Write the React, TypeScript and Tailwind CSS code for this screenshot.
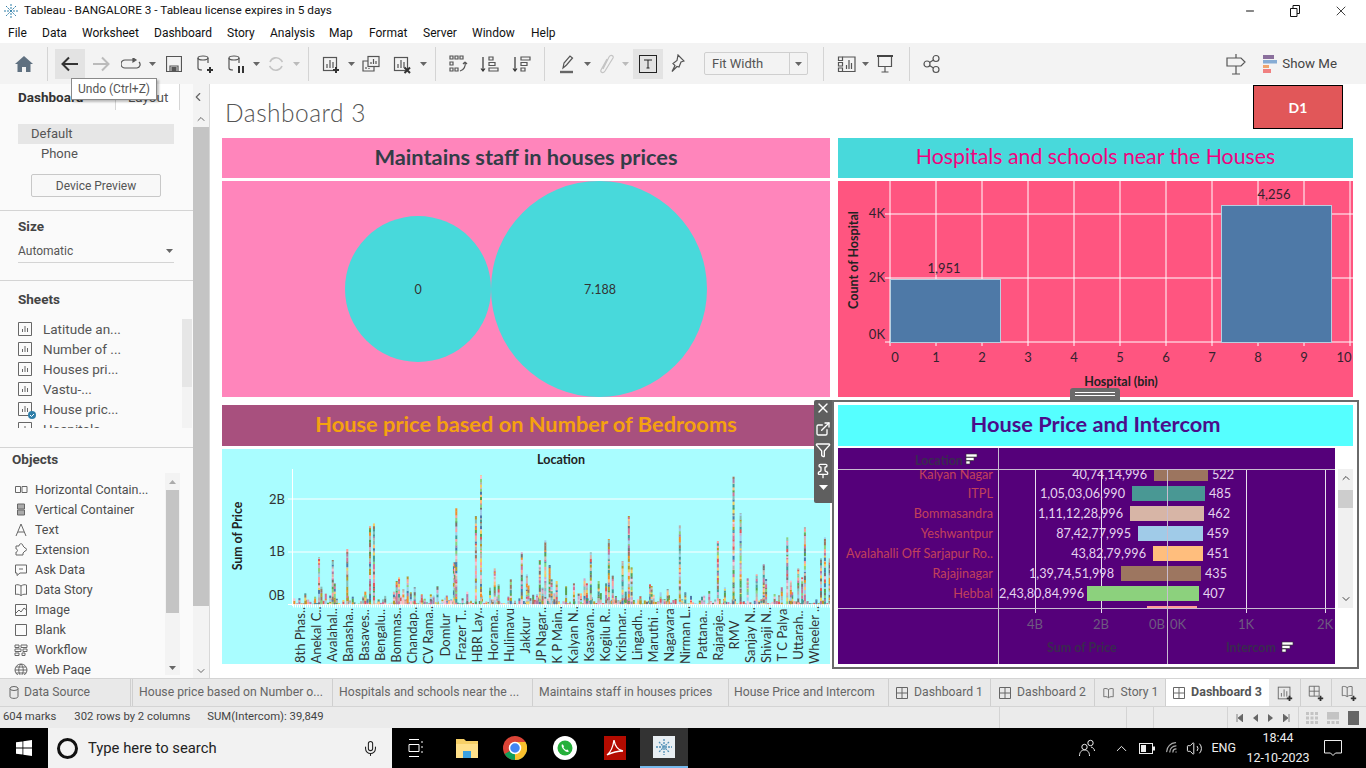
// App.tsx
import React from 'react';
import { ChevronLeft, ChevronUp, ChevronDown, X, Minus, ExternalLink, Filter, Pin, Mic, Wifi, Volume2 } from 'lucide-react';

const ui = 'font-["Roboto","Liberation_Sans",sans-serif]';
const book = 'font-["Lato","Open_Sans",sans-serif]';

const palette = ['#4e79a7', '#a0cbe8', '#f28e2b', '#ffbe7d', '#59a14f', '#8cd17d', '#b6992d', '#f1ce63', '#499894', '#86bcb6', '#e15759', '#ff9d9a', '#79706e', '#bab0ac', '#d37295', '#fabfd2', '#b07aa1', '#d4a6c8', '#9d7660', '#d7b5a6'];

// x, top of the tall bars as read off the reference
const tallBars: [number, number][] = [[187, 460], [215, 445], [250, 337], [256, 425], [240, 455], [285, 345], [290, 415], [322, 312], [336, 455], [368, 440], [380, 243], [390, 235], [402, 462], [441, 440], [448, 408], [454, 397], [465, 432], [476, 394], [484, 442], [494, 427], [512, 448], [535, 448], [552, 424], [572, 458], [594, 352], [597, 352], [600, 190], [616, 460], [628, 440], [650, 213], [663, 90], [686, 428], [698, 370], [708, 418], [739, 403], [767, 322], [780, 388], [784, 420], [796, 448], [813, 345], [820, 428], [827, 286], [838, 360], [843, 403], [850, 445], [856, 408], [880, 424], [900, 415], [912, 445], [927, 400], [933, 415], [943, 322], [963, 408], [982, 415], [989, 282], [999, 392], [1007, 453], [1024, 348], [1032, 440], [1040, 213], [1047, 366], [1070, 463], [1094, 418], [1098, 423], [1121, 442], [1139, 433], [1170, 241], [1184, 442], [1245, 438], [1267, 288], [1285, 427], [1307, 95], [1325, 205], [1343, 400], [1366, 388], [1384, 358], [1390, 402], [1430, 427], [1444, 277], [1453, 407], [1472, 370], [1482, 397], [1489, 246], [1530, 340], [1540, 277], [1552, 340]];

let seed = 17;
const rnd = () => {
  seed = (seed * 16807) % 2147483647;
  return seed / 2147483647;
};

const stackedBars = (() => {
  const out: { x: number; y: number; h: number; c: string }[] = [];
  const push = (x: number, top: number) => {
    let y = 604;
    while (y > top) {
      const h = Math.min(1 + rnd() * 3, y - top);
      y -= h;
      out.push({ x, y, h: h + 0.2, c: palette[Math.floor(rnd() * palette.length)] });
    }
  };
  for (let x = 294; x < 830; x += 2.2) push(x, 604 - rnd() * rnd() * 12);
  tallBars.forEach(([zx, zy]) => push(220 + zx / 2.55, 445 + zy / 3));
  return out;
})();

const locations = ['8th Phas..', 'Anekal C..', 'Avalahal..', 'Banasha..', 'Basaves..', 'Bengalu..', 'Bommas..', 'Chandap..', 'CV Rama..', 'Domlur', 'Frazer T..', 'HBR Lay..', 'Horama..', 'Hulimavu', 'Jakkur', 'JP Nagar..', 'K P Main..', 'Kalyan N..', 'Kasavan..', 'Kogilu R..', 'Krishnar..', 'Lingadh..', 'Maruthi ..', 'Nagavara', 'Nirman L..', 'Pattana..', 'Rajaraje..', 'RMV', 'Sanjay N..', 'Shivaji N..', 'T C Palya', 'Uttarah..', 'Wheeler ..'];

const intercomRows = [
  { name: 'Kalyan Nagar', price: '40,74,14,996', n: '522', x: 1154, w: 54, y: 469, h: 12, c: '#9c755f', ty: 475, px: 1147 },
  { name: 'ITPL', price: '1,05,03,06,990', n: '485', x: 1132, w: 73, y: 486, h: 15, c: '#499894', ty: 494, px: 1125 },
  { name: 'Bommasandra', price: '1,11,12,28,996', n: '462', x: 1130, w: 74, y: 506, h: 15, c: '#d7b5a6', ty: 514, px: 1123 },
  { name: 'Yeshwantpur', price: '87,42,77,995', n: '459', x: 1138, w: 65, y: 526, h: 15, c: '#a0cbe8', ty: 534, px: 1131 },
  { name: 'Avalahalli Off Sarjapur Ro..', price: '43,82,79,996', n: '451', x: 1153, w: 50, y: 546, h: 15, c: '#ffbe7d', ty: 554, px: 1146 },
  { name: 'Rajajinagar', price: '1,39,74,51,998', n: '435', x: 1121, w: 80, y: 566, h: 15, c: '#9d7660', ty: 574, px: 1114 },
  { name: 'Hebbal', price: '2,43,80,84,996', n: '407', x: 1087, w: 112, y: 586, h: 15, c: '#8cd17d', ty: 594, px: 1084 },
];

function SortMark({ x, y }: { x: number; y: number }) {
  return (
    <g transform={`translate(${x} ${y})`} fill="#fff" stroke="#333" strokeWidth="0.6">
      <rect x="0" y="0" width="11" height="3" />
      <rect x="0" y="3.5" width="8" height="3" />
      <rect x="0" y="7" width="4" height="3" />
    </g>
  );
}

function Icon({ children, w = 20, h = 20, vb = '0 0 20 20', className = '' }: { children: React.ReactNode; w?: number; h?: number; vb?: string; className?: string }) {
  return (
    <svg width={w} height={h} viewBox={vb} fill="none" stroke="#555" strokeWidth="1.2" className={className}>
      {children}
    </svg>
  );
}

const Caret = ({ light }: { light?: boolean }) => (
  <svg width="7" height="4" viewBox="0 0 7 4"><path d="M0 0h7L3.5 4z" fill={light ? '#bbb' : '#666'} /></svg>
);

const Slot = ({ w, active, children }: { w: string; active?: boolean; children?: React.ReactNode }) => (
  <div className={`flex h-[30px] items-center justify-center ${w} ${active ? 'bg-[#e3e3e3]' : ''}`}>{children}</div>
);

const BarGlyph = () => (
  <>
    <rect x="2.5" y="3.5" width="13" height="13" />
    <path d="M6 14V10M9 14V6M12 14V8" />
  </>
);

const Plus = () => <path d="M15 13v6M12 16h6" stroke="#333" strokeWidth="2" />;
const Cyl = () => (
  <>
    <ellipse cx="8" cy="4" rx="5" ry="2" />
    <path d="M3 4v10c0 1.2 2 2 4 2M13 4v5" />
  </>
);

function Toolbar() {
  return (
    <div className="relative flex h-[41px] items-center bg-[#f3f3f3] pl-[8px]">
      <Slot w="w-[32px]">
        <svg width="18" height="16" viewBox="0 0 18 16"><path d="M9 0L0 8h2.5v8h4.5v-5h4v5h4.5V8H18z" fill="#5f7080" /></svg>
      </Slot>
      <div className="mx-[7px] h-[34px] w-px bg-[#d4d4d4]" />
      <Slot w="w-[30px]" active>
        <Icon w={20} h={18} vb="0 0 20 18"><path d="M18 9H3M9 2.5L2.5 9 9 15.5" stroke="#333" strokeWidth="2" /></Icon>
      </Slot>
      <Slot w="w-[32px]">
        <Icon w={20} h={18} vb="0 0 20 18"><path d="M2 9h15M11 2.5L17.5 9 11 15.5" stroke="#bbb" strokeWidth="2" /></Icon>
      </Slot>
      <Slot w="w-[28px]">
        <Icon w={20} h={12} vb="0 0 20 12"><path d="M13 2H4a3.5 3.5 0 0 0 0 8h12a3.5 3.5 0 0 0 2-6" /><path d="M12 0l3 2-3 2z" fill="#555" /></Icon>
      </Slot>
      <Slot w="w-[14px]"><Caret /></Slot>
      <Slot w="w-[30px]">
        <Icon w={16} h={16} vb="0 0 16 16"><path d="M.5.5h15v15H.5z" /><path d="M4 15v-5h8v5" /><rect x="6" y="11.5" width="4" height="4" fill="#555" /></Icon>
      </Slot>
      <Slot w="w-[32px]"><Icon><Cyl /><Plus /></Icon></Slot>
      <Slot w="w-[30px]"><Icon><Cyl /><path d="M13 12v7M17 12v7" stroke="#333" strokeWidth="2" /></Icon></Slot>
      <Slot w="w-[10px]"><Caret /></Slot>
      <Slot w="w-[30px]">
        <Icon w={18} h={18} vb="0 0 18 18"><path d="M3 7a6.5 6.5 0 0 1 11-2l1.5 2M15 11a6.5 6.5 0 0 1-11 2L2.5 11" stroke="#c4c4c4" strokeWidth="1.6" /></Icon>
      </Slot>
      <Slot w="w-[10px]"><Caret light /></Slot>
      <div className="mx-[7px] h-[34px] w-px bg-[#d4d4d4]" />
      <Slot w="w-[30px]"><Icon><BarGlyph /><Plus /></Icon></Slot>
      <Slot w="w-[10px]"><Caret /></Slot>
      <Slot w="w-[30px]">
        <Icon>
          <rect x="7" y="2.5" width="11" height="10" fill="#f3f3f3" />
          <path d="M10 10V8M12.5 10V5M15 10V7" />
          <path d="M7 7H2v10h11v-4" />
          <path d="M5 15v-2M8 15v-1" />
        </Icon>
      </Slot>
      <Slot w="w-[32px]"><Icon><BarGlyph /><path d="M12.5 13.5l5.5 5.5M18 13.5L12.5 19" stroke="#333" strokeWidth="2" /></Icon></Slot>
      <Slot w="w-[10px]"><Caret /></Slot>
      <div className="mx-[7px] h-[34px] w-px bg-[#d4d4d4]" />
      <Slot w="w-[30px]">
        <Icon>
          <path d="M2 2h3v3H2zM7 2h3v3H7zM12 2h3v3h-3zM2 8h3v3H2zM2 14h3v3H2zM7 14h3v3H7z" />
          <path d="M17 8c1 4-1 8-5 9M17 8l-2 2M17 8l2 2" />
        </Icon>
      </Slot>
      <Slot w="w-[34px]">
        <Icon><path d="M3 3v14M1 14.5L3 17l2-2.5" stroke="#333" /><path d="M9 3h4v3H9zM9 8.5h6v3H9zM9 14h9v3H9z" /></Icon>
      </Slot>
      <Slot w="w-[30px]">
        <Icon><path d="M3 3v14M1 14.5L3 17l2-2.5" stroke="#333" /><path d="M9 3h9v3H9zM9 8.5h6v3H9zM9 14h4v3H9z" /></Icon>
      </Slot>
      <div className="mx-[7px] h-[34px] w-px bg-[#d4d4d4]" />
      <Slot w="w-[32px]">
        <Icon><path d="M5 14L6 9l6-7 2.5 2-6 7zM5 14l3-2.500" /><path d="M2 18h13" stroke="#666" strokeWidth="2.4" /></Icon>
      </Slot>
      <Slot w="w-[7px]"><Caret /></Slot>
      <Slot w="w-[30px]">
        <Icon w={16} h={20} vb="0 0 16 20"><path d="M5 15l6-12c2-3 5-1 4 1L7 17c-2 3-5 1-4-1l6-11" stroke="#c4c4c4" /></Icon>
      </Slot>
      <Slot w="w-[9px]"><Caret light /></Slot>
      <div className="w-[3px]" />
      <Slot w="w-[30px]" active>
        <svg width="18" height="18" viewBox="0 0 18 18" fill="none" stroke="#222"><rect x=".5" y=".5" width="17" height="17" /><path d="M5 5h8M9 5v8M7.500 13h3" /></svg>
      </Slot>
      <Slot w="w-[28px]">
        <Icon w={16} h={20} vb="0 0 16 20"><path d="M9 1l6 6-3 1-2 5-2-.500-5 5 3-6-2-2 4-3z" /></Icon>
      </Slot>
      <div className="w-[13px]" />
      <div className={`flex h-[23px] w-[104px] items-center rounded-[2px] border border-[#cfcfcf] bg-[#f3f3f3] pl-[7px] text-[13px] text-[#555] ${ui}`}>
        <span className="flex-1">Fit Width</span>
        <span className="flex h-full w-[18px] items-center justify-center border-l border-[#cfcfcf]"><Caret /></span>
      </div>
      <div className="w-[15px]" />
      <div className="h-[34px] w-px bg-[#d4d4d4]" />
      <div className="w-[8px]" />
      <Slot w="w-[30px]">
        <Icon>
          <path d="M1.500 3h4v3.500h-4zM1.500 8.500h4V12h-4zM1.500 14h4v3.500h-4z" />
          <path d="M5.500 3H18v14.500H5.500" />
          <path d="M9.500 15v-4M12 15V6M14.500 15V9" />
        </Icon>
      </Slot>
      <Slot w="w-[7px]"><Caret /></Slot>
      <Slot w="w-[32px]">
        <Icon>
          <path d="M2 2h16" stroke="#444" strokeWidth="2" />
          <path d="M3.500 3v9.500h13V3M10 12.500V18M6.500 18h7" />
        </Icon>
      </Slot>
      <div className="mx-[8px] h-[34px] w-px bg-[#d4d4d4]" />
      <Slot w="w-[28px]">
        <Icon>
          <circle cx="5" cy="10" r="3" />
          <circle cx="14" cy="4.500" r="3" />
          <circle cx="14" cy="15.500" r="3" />
          <path d="M7.500 8.500l4-2.500M7.500 11.500l4 2.500" />
        </Icon>
      </Slot>
      <div className="flex-1" />
      <Slot w="w-[22px]">
        <Icon w={20} h={22} vb="0 0 20 22">
          <path d="M1 5h14l4 4-4 4H1z" />
          <path d="M10 1v4M10 13v8M6 21h8" />
        </Icon>
      </Slot>
      <div className="w-[16px]" />
      <svg width="14" height="18" viewBox="0 0 14 18">
        <rect width="11" height="4" fill="#8a6f9c" />
        <rect y="5" width="14" height="3.500" fill="#86acd4" />
        <rect y="10" width="6" height="3" fill="#f0a56d" />
        <rect y="14" width="8" height="4" fill="#f08080" />
      </svg>
      <span className={`ml-[5px] mr-[29px] text-[13.300px] text-[#444] ${ui}`}>Show Me</span>
      <div className={`absolute left-[71px] top-[35px] z-20 border border-[#8a8a8a] bg-[#fff] px-[6px] py-[1px] text-[12px] text-[#555] shadow-[2px_2px_2px_rgba(0,0,0,0.25)] ${ui}`}>Undo (Ctrl+Z)</div>
    </div>
  );
}

const menus = [
  ['File', 'w-[34px]'], ['Data', 'w-[40px]'], ['Worksheet', 'w-[72px]'], ['Dashboard', 'w-[73px]'], ['Story', 'w-[43px]'], ['Analysis', 'w-[59px]'], ['Map', 'w-[40px]'], ['Format', 'w-[54px]'], ['Server', 'w-[49px]'], ['Window', 'w-[59px]'], ['Help', 'w-[40px]'],
];

const sheets = ['Latitude an...', 'Number of ...', 'Houses pri...', 'Vastu-...', 'House pric...', 'Hospitals'];

const objectIcons: Record<string, React.ReactNode> = {
  'Horizontal Contain...': <path d="M1.500 3.500h5v6h-5zM8 3.500h5v6H8z" />,
  'Vertical Container': <path d="M3.500 1h7v5h-7zM3.500 7h7v5h-7z" fill="#aaa" />,
  Text: <path d="M2 13L7 1l5 12M4 9h6" />,
  Extension: <path d="M2 6V3h3c0-3 4-3 4 0l2 2c2 0 2 3 0 3l-2 2v2H2V9c2 0 2-3 0-3z" />,
  'Ask Data': <path d="M1.500 2h11v8H6l-3 2.500V10H1.500zM5 6h4" />,
  'Data Story': <path d="M7 3C5 1.500 3 1.500 1.500 2v9.500c1.500-.5 3.500-.5 5.500 1 2-1.500 4-1.500 5.500-1V2C11 1.500 9 1.500 7 3zM7 3v9.500" />,
  Image: <path d="M1.500 1.500h11v11h-11zM2 10l3-3 2 2 3-4 2.500 2" />,
  Blank: <path d="M1.500 1.500h11v11h-11z" />,
  Workflow: <path d="M1 2h4v2.500H1zM7 2h6v2.500H7zM1 6h6v2.500H1zM9 6h4v2.500H9zM1 10h4v2.500H1zM8 10h3v2.500H8z" />,
  'Web Page': <path d="M7 1a6 6 0 1 0 0 12A6 6 0 0 0 7 1zM1 7h12M7 1c-3 3-3 9 0 12M7 1c3 3 3 9 0 12M2 4h10M2 10h10" />,
};

function Sidebar() {
  return (
    <aside className={`flex h-full w-[210px] shrink-0 bg-[#fafafa] text-[13px] text-[#555] ${ui}`}>
      <div className="relative w-[193px]">
        <div className="flex h-[26px]">
          <div className="w-[115px] pl-[18px] pt-[3px] text-[13.500px] font-bold text-[#333]">Dashboard</div>
          <div className="h-[26px] w-[65px] border-x border-[#d6d6d6] bg-[#fff] pl-[12px] pt-[3px] text-[13.500px] text-[#555]">Layout</div>
        </div>
        <div className="h-[1px]" />
        <div className="ml-[18px] mt-[13px] h-[20px] w-[156px] bg-[#e6e6e6] pl-[13px] leading-[20px]">Default</div>
        <div className="ml-[41px] h-[20px] leading-[20px]">Phone</div>
        <div className="ml-[31px] mt-[10px] flex h-[23px] w-[130px] items-center justify-center rounded-[2px] border border-[#c8c8c8] bg-[#f8f8f8] text-[12px]">Device Preview</div>
        <div className="mt-[13px] h-px bg-[#d4d4d4]" />
        <div className="ml-[18px] mt-[6px] h-[20px] text-[13.500px] font-bold leading-[18px] text-[#444]">Size</div>
        <div className="ml-[18px] mt-[6px] flex h-[20px] w-[156px] items-center justify-between border-b border-[#d4d4d4] pb-[4px] pr-[1px] text-[12px]">
          Automatic <Caret />
        </div>
        <div className="mt-[17px] h-px bg-[#d4d4d4]" />
        <div className="ml-[18px] mt-[9px] h-[20px] text-[13.500px] font-bold leading-[18px] text-[#444]">Sheets</div>
        <div className="relative ml-[18px] mt-[9px] h-[109px] w-[174px] overflow-hidden">
          <div className="absolute right-0 top-0 h-full w-[10px] bg-[#f3f3f3]"><div className="h-[68px] bg-[#e6e6e6]" /></div>
          {sheets.map((s, i) => (
            <div key={s} className="flex h-[20px] items-center gap-[11px]">
              <span className="relative">
                <svg width="14" height="14" viewBox="0 0 14 14" fill="none" stroke="#666" className="block">
                  <path d="M.5.5h13v13H.5zM4.500 10V7M7 10V4M9.500 10V6" />
                </svg>
                {i === 4 && (
                  <svg width="8" height="8" viewBox="0 0 8 8" className="absolute -bottom-[3px] -right-[4px]">
                    <circle cx="4" cy="4" r="4" fill="#2f7ea8" />
                    <path d="M2 4l1.500 1.500L6 3" fill="none" stroke="#fff" />
                  </svg>
                )}
              </span>
              <span className="text-[13.500px]">{s}</span>
            </div>
          ))}
        </div>
        <div className="mt-[19px] h-px bg-[#d4d4d4]" />
        <div className="ml-[12px] mt-[2px] h-[20px] text-[13.500px] font-bold leading-[18px] text-[#444]">Objects</div>
        <div className="relative mt-[3px] h-[202px] w-[180px] overflow-hidden">
          <div className="absolute right-0 top-0 flex h-full w-[15px] flex-col items-center bg-[#f3f3f3]">
            <div className="flex h-[17px] items-center"><svg width="7" height="4" viewBox="0 0 7 4"><path d="M0 4h7L3.500 0z" fill="#aaa" /></svg></div>
            <div className="h-[123px] w-[13px] bg-[#c4c4c4]" />
            <div className="flex-1" />
            <div className="flex h-[14px] items-center"><Caret /></div>
          </div>
          <div className="pt-[7px]">
            {Object.keys(objectIcons).map((name) => (
              <div key={name} className="flex h-[20px] items-center gap-[7px] pl-[14px]">
                <svg width="14" height="14" viewBox="0 0 14 14" fill="none" stroke="#666">{objectIcons[name]}</svg>
                <span className="text-[12.500px] text-[#4d4d4d]">{name}</span>
              </div>
            ))}
          </div>
        </div>
        <ChevronLeft className="absolute left-[191px] top-[6px] z-10 h-[14px] w-[14px] text-[#666]" />
      </div>
      <div className="flex w-[17px] flex-col items-center border-r border-[#d8d8d8] bg-[#f3f3f3] pt-[26px]">
        <div className="flex h-[17px] items-center"><ChevronUp className="h-[12px] w-[12px] text-[#666]" /></div>
        <div className="h-[479px] w-[16px] bg-[#c4c4c4]" />
        <div className="flex-1" />
        <div className="flex h-[14px] items-center"><ChevronDown className="h-[12px] w-[12px] text-[#666]" /></div>
      </div>
    </aside>
  );
}

function BubbleChart() {
  return (
    <svg width="608" height="216" viewBox="222 181 608 216" className="block bg-[#ff85bb]">
      <circle cx="418" cy="289" r="73" fill="#48d9db" />
      <circle cx="599" cy="289" r="108" fill="#48d9db" />
      <text x="418" y="294" textAnchor="middle" fontSize="12.500" fontFamily="Lato" fill="#333">0</text>
      <text x="600" y="294" textAnchor="middle" fontSize="12.500" fontFamily="Lato" fill="#333">7.188</text>
    </svg>
  );
}

function HospitalChart() {
  const vs = [890, 936, 982, 1028, 1074, 1120, 1166, 1212, 1258, 1304, 1350];
  return (
    <svg width="515" height="216" viewBox="838 181 515 216" className="block bg-[#ff5580]" fontFamily="Lato" fill="#33222e">
      {vs.map((x) => <line key={x} x1={x} x2={x} y1="181" y2="346" stroke="#fff" strokeWidth="1" />)}
      {[214, 278, 342].map((y) => <line key={y} x1="885" x2="1353" y1={y} y2={y} stroke="#fff" strokeWidth="1" />)}
      <rect x="890.500" y="279.500" width="110" height="63" fill="#4e79a7" stroke="#b7cfe0" />
      <rect x="1221.500" y="205.500" width="110" height="137" fill="#4e79a7" stroke="#b7cfe0" />
      <text x="944" y="273" textAnchor="middle" fontSize="13">1,951</text>
      <text x="1274" y="199" textAnchor="middle" fontSize="13">4,256</text>
      {[['4K', 218], ['2K', 282], ['0K', 339]].map(([t, y]) => <text key={t} x="885" y={y} textAnchor="end" fontSize="13">{t}</text>)}
      {vs.map((x, i) => <text key={x} x={i === 0 ? 895 : i === 10 ? 1344 : x} y="362" textAnchor="middle" fontSize="13">{i}</text>)}
      <text x="1121" y="386" textAnchor="middle" fontSize="12.500" fontWeight="bold" fill="#222">Hospital (bin)</text>
      <text transform="translate(858 260) rotate(-90)" textAnchor="middle" fontSize="12.500" fontWeight="bold" fill="#222">Count of Hospital</text>
    </svg>
  );
}

function BedroomChart() {
  return (
    <svg width="608" height="215" viewBox="222 449 608 215" className="block bg-[#a9fdff]" fontFamily="Lato">
      <text x="561" y="464" textAnchor="middle" fontSize="12.500" fontWeight="bold" fill="#222">Location</text>
      <text transform="translate(242 536) rotate(-90)" textAnchor="middle" fontSize="12.300" fontWeight="bold" fill="#222">Sum of Price</text>
      {[['2B', 504], ['1B', 556], ['0B', 600]].map(([t, y]) => <text key={t} x="285" y={y} textAnchor="end" fontSize="13" fill="#333">{t}</text>)}
      <line x1="292.500" x2="292.500" y1="469" y2="606" stroke="#fff" />
      {[499, 552].map((y) => <line key={y} x1="288" x2="830" y1={y} y2={y} stroke="#fff" />)}
      <line x1="288" x2="830" y1="604.500" y2="604.500" stroke="#fff" />
      {stackedBars.map((b, i) => <rect key={i} x={b.x} y={b.y} width="2" height={b.h} fill={b.c} />)}
      <line x1="293" x2="830" y1="606" y2="606" stroke="#fff" strokeWidth="3" strokeDasharray="1 1" />
      {locations.map((t, i) => (
        <text key={t} transform={`translate(${305 + i * 16.06} 635) rotate(-90)`} textAnchor="middle" fontSize="13" fill="#333">{t}</text>
      ))}
    </svg>
  );
}

function IntercomChart() {
  return (
    <div className="flex items-start bg-white">
      <svg width="497" height="216" viewBox="838 448 497 216" className="block bg-[#55007a]" fontFamily="Lato">
        {[1035.500, 1101.500, 1246.500, 1325.500].map((x) => <line key={x} x1={x} x2={x} y1="469" y2="613" stroke="#e8e0ee" />)}
        {intercomRows.map((r) => (
          <g key={r.name} fontSize="12.700">
            <rect x={r.x} y={r.y} width={r.w} height={r.h} fill={r.c} />
            <text x="993" y={r.ty + 4} textAnchor="end" fill="#c2405a">{r.name}</text>
            <text x={r.px} y={r.ty + 4} textAnchor="end" fill="#e4d3ef">{r.price}</text>
            <text x={r.x + r.w + 4} y={r.ty + 4} fill="#e4d3ef">{r.n}</text>
          </g>
        ))}
        <rect x="1147" y="606" width="50" height="2" fill="#ff9d9a" />
        <line x1="838" x2="1335" y1="469.500" y2="469.500" stroke="#c8bcd0" />
        <line x1="838" x2="1335" y1="608.500" y2="608.500" stroke="#c8bcd0" />
        <line x1="998.500" x2="998.500" y1="448" y2="664" stroke="#c8bcd0" />
        <line x1="1167.500" x2="1167.500" y1="469" y2="664" stroke="#c8bcd0" />
        <g fontSize="13" fill="#6e5a80" textAnchor="middle">
          <text x="1035" y="629">4B</text>
          <text x="1101" y="629">2B</text>
          <text x="1157" y="629">0B</text>
          <text x="1178" y="629">0K</text>
          <text x="1246" y="629">1K</text>
          <text x="1325" y="629">2K</text>
        </g>
        <g fontSize="12.500" fontWeight="bold" fill="#3a2a50">
          <text x="915" y="465">Location</text>
          <text x="1047" y="652">Sum of Price</text>
          <text x="1226" y="652">Intercom</text>
        </g>
        <SortMark x={966} y={454} />
        <SortMark x={1282} y={642} />
      </svg>
      <div className="ml-[3px] mt-[21px] flex h-[139px] w-[15px] flex-col items-center bg-[#f0f0f0]">
        <ChevronUp className="mt-[3px] h-[12px] w-[12px] text-[#444]" />
        <div className="mt-[6px] h-[18px] w-[15px] bg-[#cdcdcd]" />
        <div className="flex-1" />
        <ChevronDown className="mb-[3px] h-[12px] w-[12px] text-[#444]" />
      </div>
    </div>
  );
}

function Dashboard() {
  return (
    <main className="relative flex-1 bg-white">
      <div className="flex h-[54px] items-start justify-between pl-[15px] pr-[23px]">
        <div className={`pt-[12px] text-[24.500px] font-light leading-[34px] tracking-[0.5px] text-[#555] ${book}`}>Dashboard 3</div>
        <div className={`mt-[1px] flex h-[44px] w-[90px] items-center justify-center border border-black bg-[#e15759] text-[14px] font-bold text-white ${book}`}>D1</div>
      </div>
      <div className={`ml-[12px] grid w-[1131px] grid-cols-[608px_515px] gap-x-[8px] ${book}`}>
        <div className="flex h-[40px] items-center justify-center bg-[#ff85bb] pb-[2px] text-[21.800px] font-bold text-[#333d47]">Maintains staff in houses prices</div>
        <div className="flex h-[40px] items-center justify-center bg-[#48d9db] pb-[2px] text-[21.300px] font-normal text-[#f0047f]">Hospitals and schools near the Houses</div>
        <div className="mt-[3px]"><BubbleChart /></div>
        <div className="mt-[3px]"><HospitalChart /></div>
        <div className="mt-[8px] flex h-[41px] items-center justify-center bg-[#a8507e] pb-[2px] text-[21.800px] font-bold text-[#f5a20f]">House price based on Number of Bedrooms</div>
        <div className="mt-[8px] flex h-[41px] items-center justify-center bg-[#55ffff] pb-[2px] text-[21.800px] font-bold text-[#4b0d8a]">House Price and Intercom</div>
        <div className="mt-[3px]"><BedroomChart /></div>
        <div className="mt-[2px]"><IntercomChart /></div>
      </div>

      {/* selection frame round the active tile */}
      <div className="pointer-events-none absolute left-[622px] top-[316px] h-[269px] w-[527px] border-2 border-[#6a6a6a]" />
      <div className="absolute left-[860px] top-[304px] flex h-[12px] w-[50px] flex-col items-center justify-center gap-[2px] rounded-t-[3px] bg-[#6a6a6a]">
        <div className="h-px w-[40px] bg-white" />
        <div className="h-px w-[40px] bg-white" />
      </div>
      <div className="absolute left-[604px] top-[316px] flex h-[103px] w-[18px] flex-col items-center gap-[5px] rounded-l-[2px] bg-[#5f5f5f] text-white">
        <X className="h-[16px] w-[16px]" strokeWidth={2} />
        <ExternalLink className="h-[16px] w-[16px]" />
        <Filter className="h-[16px] w-[16px]" />
        <Pin className="h-[16px] w-[16px]" />
        <svg width="9" height="5" viewBox="0 0 9 5" className="mt-[1px]"><path d="M0 0h9L4.500 5z" fill="#fff" /></svg>
      </div>
    </main>
  );
}

const sheetTabs: [string, string][] = [
  ['House price based on Number o...', 'w-[200px] pl-[6px]'],
  ['Hospitals and schools near the ...', 'w-[200px] pl-[6px]'],
  ['Maintains staff in houses prices', 'w-[196px] pl-[6px]'],
  ['House Price and Intercom', 'w-[160px] pl-[5px]'],
];

const DashGlyph = () => (
  <svg width="12" height="12" viewBox="0 0 12 12" fill="none" stroke="#666" className="shrink-0"><path d="M.5.5h11v11H.5zM6 .5v11M.5 6h11" /></svg>
);

function TabBar() {
  return (
    <div className={`flex h-[29px] border-y border-[#d4d4d4] bg-[#e9e9e9] text-[12.200px] text-[#666] ${ui}`}>
      <div className="flex w-[133px] items-center gap-[5px] border-r-[3px] border-double border-[#cfcfcf] pl-[9px]">
        <svg width="10" height="13" viewBox="0 0 10 13" fill="none" stroke="#666"><ellipse cx="5" cy="2.500" rx="4" ry="2" /><path d="M1 2.500v8c0 2.500 8 2.500 8 0v-8" /></svg>
        <span>Data Source</span>
      </div>
      {sheetTabs.map(([label, w]) => (
        <div key={label} className={`flex items-center border-r border-[#cfcfcf] ${w}`}>{label}</div>
      ))}
      <div className="flex w-[102px] items-center justify-center gap-[6px] border-r border-[#cfcfcf]"><DashGlyph /> Dashboard 1</div>
      <div className="flex w-[104px] items-center justify-center gap-[6px] border-r border-[#cfcfcf]"><DashGlyph /> Dashboard 2</div>
      <div className="flex w-[71px] items-center justify-center gap-[6px] border-r border-[#cfcfcf]">
        <svg width="13" height="12" viewBox="0 0 14 14" fill="none" stroke="#666">{objectIcons['Data Story']}</svg>
        Story 1
      </div>
      <div className="flex w-[103px] items-center justify-center gap-[6px] bg-white text-[12.500px] font-bold text-[#555]">
        <DashGlyph /> Dashboard 3
      </div>
      <div className="flex w-[32px] items-center justify-center border-r border-[#cfcfcf]">
        <svg width="18" height="18" viewBox="0 0 20 20" fill="none" stroke="#666"><BarGlyph /><Plus /></svg>
      </div>
      <div className="flex w-[31px] items-center justify-center border-r border-[#cfcfcf]">
        <svg width="18" height="18" viewBox="0 0 20 20" fill="none" stroke="#666"><path d="M2.500 2.500h11v11h-11zM8 2.500v11M2.500 8h11" /><Plus /></svg>
      </div>
      <div className="flex flex-1 items-center justify-center">
        <svg width="18" height="18" viewBox="0 0 20 20" fill="none" stroke="#666"><path d="M8 4C6 2.500 4 2.500 2.500 3v10c1.500-.5 3.500-.5 5.500 1 2-1.500 4-1.500 5.500-1V3C12 2.500 10 2.500 8 4zM8 4v10" /><Plus /></svg>
      </div>
    </div>
  );
}

function StatusBar() {
  return (
    <div className={`flex h-[21px] items-center bg-[#ebebeb] text-[11.300px] text-[#444] ${ui}`}>
      <span className="ml-[3px]">604 marks</span>
      <span className="ml-[18px]">302 rows by 2 columns</span>
      <span className="ml-[17px]">SUM(Intercom): 39,849</span>
      <div className="flex-1" />
      <div className="h-full w-[127px] border-l border-[#d4d4d4]" />
      <div className="h-full w-[27px] border-l border-[#d4d4d4]" />
      <div className="h-full w-[74px] border-l border-[#d4d4d4]" />
      <div className="flex h-full w-[71px] items-center justify-between border-l border-[#d4d4d4] px-[8px]">
        <svg width="7" height="8" viewBox="0 0 7 8"><path d="M1 0v8M7 0v8L2 4z" stroke="#666" strokeWidth="0.8" fill="#666" /></svg>
        <svg width="5" height="8" viewBox="0 0 5 8"><path d="M5 0v8L0 4z" fill="#666" /></svg>
        <svg width="5" height="8" viewBox="0 0 5 8"><path d="M0 0v8l5-4z" fill="#666" /></svg>
        <svg width="7" height="8" viewBox="0 0 7 8"><path d="M6 0v8M0 0v8l5-4z" stroke="#666" strokeWidth="0.8" fill="#666" /></svg>
      </div>
      <div className="flex h-full w-[68px] items-center gap-[9px] border-l border-[#d4d4d4] pl-[7px]">
        <svg width="12" height="12" viewBox="0 0 12 12" fill="#c4c4c4"><path d="M0 0h3v3H0zM4.500 0h3v3h-3zM9 0h3v3H9zM0 4.500h3v3H0zM4.500 4.500h3v3h-3zM9 4.500h3v3H9zM0 9h3v3H0zM4.500 9h3v3h-3zM9 9h3v3H9z" /></svg>
        <svg width="12" height="12" viewBox="0 0 12 12" fill="#c4c4c4"><path d="M0 0h12v7.500H0zM0 9h3v3H0zM4.500 9h3v3h-3zM9 9h3v3H9z" /></svg>
        <div className="h-[14px] w-[11px] bg-[#666]" />
      </div>
    </div>
  );
}

function Taskbar() {
  return (
    <div className={`flex h-[40px] items-center bg-black text-white ${ui}`}>
      <div className="flex w-[48px] justify-center">
        <svg width="16" height="16" viewBox="0 0 16 16" fill="#fff"><path d="M0 2.300L6.500 1.400v6.200H0zM7.300 1.300L16 0v7.600H7.300zM0 8.400h6.500v6.200L0 13.700zM7.300 8.400H16V16l-8.700-1.200z" /></svg>
      </div>
      <div className="flex h-full w-[344px] items-center bg-[#f2f2f2] pl-[9px] text-[#222]">
        <span className="h-[21px] w-[21px] rounded-full border-[3px] border-[#111]" />
        <span className="ml-[10px] flex-1 text-[14.800px]">Type here to search</span>
        <Mic className="mr-[13px] h-[17px] w-[17px] text-[#222]" strokeWidth={1.5} />
      </div>
      <div className="flex h-full w-[48px] items-center justify-center">
        <svg width="16" height="18" viewBox="0 0 16 18" fill="none" stroke="#fff"><path d="M1 .5h10M1 17.500h10M1 5.500h10v7H1zM14 2v2M14 7v2M14 12v2" /></svg>
      </div>
      <div className="flex h-full w-[50px] items-center justify-center">
        <svg width="22" height="22" viewBox="0 0 22 22" className="ml-[4px]"><path d="M0 2h8l2 2h12v17H0z" fill="#f6cf66" /><path d="M0 7h22v14H0z" fill="#ffe08a" /><path d="M7 21v-7h8v7z" fill="#3aa0e0" /></svg>
      </div>
      <div className="flex h-full w-[50px] items-center justify-center">
        <svg width="24" height="24" viewBox="0 0 24 24">
          <circle cx="12" cy="12" r="12" fill="#db4437" />
          <path d="M12 12L1.600 18a12 12 0 0 0 10.400 6 12 12 0 0 0 10.400-18H12z" fill="#0f9d58" />
          <path d="M12 6h10.400A12 12 0 0 1 12 24z" fill="#fbc02d" />
          <circle cx="12" cy="12" r="5.500" fill="#4285f4" stroke="#fff" strokeWidth="1.500" />
        </svg>
      </div>
      <div className="flex h-full w-[50px] items-center justify-center">
        <svg width="24" height="24" viewBox="0 0 24 24">
          <circle cx="12" cy="12" r="12" fill="#fff" />
          <circle cx="12" cy="12" r="7.500" fill="#25b03b" />
          <path d="M9 8c-1 2 0 4 2 6s3 2.500 5 1.500l-1.500-2-1.500.5c-1-.5-2-1.500-2.500-2.500l.5-1.500z" fill="#fff" />
        </svg>
      </div>
      <div className="flex h-full w-[50px] items-center justify-center">
        <svg width="22" height="24" viewBox="0 0 22 24"><rect width="22" height="24" fill="#b30b00" /><path d="M3 19c4-3 6-8 7-15 1 6 3 10 9 11-5 0-10 1-16 4z" fill="none" stroke="#fff" strokeWidth="1.300" /></svg>
      </div>
      <div className="flex h-full w-[48px] items-center justify-center border-b-2 border-[#76b9ed] bg-[#333]">
        <svg width="22" height="22" viewBox="0 0 22 22" fill="none"><rect width="22" height="22" fill="#e8eef2" /><path d="M11 3v16M3 11h16M6 6l10 10M16 6L6 16" stroke="#4e8fb5" strokeWidth="1.300" strokeDasharray="2 1" /></svg>
      </div>
      <div className="flex-1" />
      <div className="flex items-center text-[#eee]">
        <svg width="18" height="18" viewBox="0 0 18 18" fill="none" stroke="#eee"><circle cx="6.500" cy="8" r="2.700" /><circle cx="12.500" cy="4" r="2.700" /><path d="M1.500 17c0-4 2-6 5-6s5 2 5 6M13 8c2 .5 3.500 2 3.500 4" /></svg>
        <ChevronUp className="ml-[17px] h-[17px] w-[17px]" strokeWidth={1.4} />
        <svg width="16" height="11" viewBox="0 0 16 11" className="ml-[9px]"><rect x=".5" y=".5" width="13" height="10" fill="none" stroke="#eee" /><rect x="2" y="2" width="5" height="7" fill="#eee" /><rect x="14" y="3.500" width="2" height="4" fill="#eee" /></svg>
        <Wifi className="ml-[10px] h-[15px] w-[15px] -rotate-45 text-[#aaa]" />
        <Volume2 className="ml-[6px] h-[17px] w-[17px]" strokeWidth={1.4} />
        <span className="ml-[8px] text-[12.500px]">ENG</span>
        <div className="ml-[7px] w-[70px] whitespace-nowrap text-center text-[12.500px] leading-[20px]">
          <div>18:44</div>
          <div>12-10-2023</div>
        </div>
        <svg width="18" height="18" viewBox="0 0 18 18" fill="none" stroke="#eee" className="ml-[11px] mr-[24px]"><path d="M.5 1.500h17v12.500h-6L9 16.500 6.500 14h-6z" /></svg>
      </div>
    </div>
  );
}

export default function App() {
  return (
    <div className="flex h-[768px] w-[1366px] flex-col overflow-hidden bg-white">
      <div className={`flex h-[22px] items-center bg-white text-[11.800px] text-[#111] ${ui}`}>
        <svg width="16" height="16" viewBox="0 0 16 16" fill="none" stroke="#2f7ea8" className="ml-[3px] mr-[5px]"><path d="M8 1v14M1 8h14M3 3l10 10M13 3L3 13" strokeDasharray="2 1" /></svg>
        <span>Tableau - BANGALORE 3 - Tableau license expires in 5 days</span>
        <div className="flex-1" />
        <Minus className="mr-[34px] h-[12px] w-[12px] text-[#111]" />
        <svg width="10" height="12" viewBox="0 0 10 12" fill="none" stroke="#111" className="mr-[33px]"><path d="M.5 3.500h6.500v8H.5zM3 3.500V.5h6.500v8H7" /></svg>
        <X className="mr-[17px] h-[16px] w-[16px] text-[#111]" strokeWidth={1.2} />
      </div>
      <div className={`flex h-[21px] items-center bg-white pl-[8px] text-[12px] text-[#111] ${ui}`}>
        {menus.map(([m, w]) => <span key={m} className={w}>{m}</span>)}
      </div>
      <Toolbar />
      <div className="flex h-[594px]">
        <Sidebar />
        <Dashboard />
      </div>
      <TabBar />
      <StatusBar />
      <Taskbar />
    </div>
  );
}
